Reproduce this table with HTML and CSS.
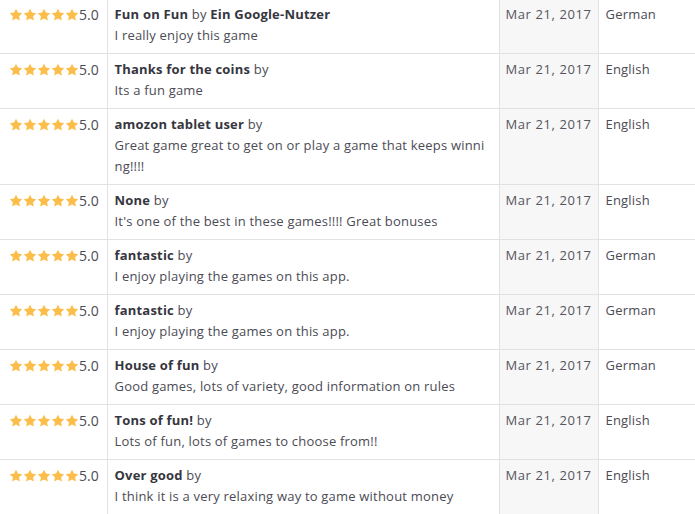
FILE: index.html
```html
<!DOCTYPE html>
<html>
<head>
<meta charset="utf-8">
<link rel="stylesheet" href="styles.css">
</head>
<body>
<svg width="0" height="0" class="defs"><defs><symbol id="star" viewBox="0 0 24 24"><path d="M12 1.2l3.3 6.7 7.4 1.1-5.4 5.2 1.3 7.4L12 18.1l-6.6 3.5 1.3-7.4L1.3 9l7.4-1.1z"/></symbol></defs></svg>
<table class="reviews">
<colgroup><col class="c-rating"><col class="c-review"><col class="c-date"><col class="c-lang"></colgroup>
<tbody>
<tr><td class="rating"><span class="stars"><svg><use href="#star"/></svg><svg><use href="#star"/></svg><svg><use href="#star"/></svg><svg><use href="#star"/></svg><svg><use href="#star"/></svg></span><span class="score">5.0</span></td><td class="review"><b>Fun on Fun</b> by <b>Ein Google-Nutzer</b><br>I really enjoy this game</td><td class="date">Mar 21, 2017</td><td class="lang">German</td></tr>
<tr><td class="rating"><span class="stars"><svg><use href="#star"/></svg><svg><use href="#star"/></svg><svg><use href="#star"/></svg><svg><use href="#star"/></svg><svg><use href="#star"/></svg></span><span class="score">5.0</span></td><td class="review"><b>Thanks for the coins</b> by<br>Its a fun game</td><td class="date">Mar 21, 2017</td><td class="lang">English</td></tr>
<tr><td class="rating"><span class="stars"><svg><use href="#star"/></svg><svg><use href="#star"/></svg><svg><use href="#star"/></svg><svg><use href="#star"/></svg><svg><use href="#star"/></svg></span><span class="score">5.0</span></td><td class="review"><b>amozon tablet user</b> by<br>Great game great to get on or play a game that keeps winning!!!!</td><td class="date">Mar 21, 2017</td><td class="lang">English</td></tr>
<tr><td class="rating"><span class="stars"><svg><use href="#star"/></svg><svg><use href="#star"/></svg><svg><use href="#star"/></svg><svg><use href="#star"/></svg><svg><use href="#star"/></svg></span><span class="score">5.0</span></td><td class="review"><b>None</b> by<br>It's one of the best in these games!!!! Great bonuses</td><td class="date">Mar 21, 2017</td><td class="lang">English</td></tr>
<tr><td class="rating"><span class="stars"><svg><use href="#star"/></svg><svg><use href="#star"/></svg><svg><use href="#star"/></svg><svg><use href="#star"/></svg><svg><use href="#star"/></svg></span><span class="score">5.0</span></td><td class="review"><b>fantastic</b> by<br>I enjoy playing the games on this app.</td><td class="date">Mar 21, 2017</td><td class="lang">German</td></tr>
<tr><td class="rating"><span class="stars"><svg><use href="#star"/></svg><svg><use href="#star"/></svg><svg><use href="#star"/></svg><svg><use href="#star"/></svg><svg><use href="#star"/></svg></span><span class="score">5.0</span></td><td class="review"><b>fantastic</b> by<br>I enjoy playing the games on this app.</td><td class="date">Mar 21, 2017</td><td class="lang">German</td></tr>
<tr><td class="rating"><span class="stars"><svg><use href="#star"/></svg><svg><use href="#star"/></svg><svg><use href="#star"/></svg><svg><use href="#star"/></svg><svg><use href="#star"/></svg></span><span class="score">5.0</span></td><td class="review"><b>House of fun</b> by<br>Good games, lots of variety, good information on rules</td><td class="date">Mar 21, 2017</td><td class="lang">German</td></tr>
<tr><td class="rating"><span class="stars"><svg><use href="#star"/></svg><svg><use href="#star"/></svg><svg><use href="#star"/></svg><svg><use href="#star"/></svg><svg><use href="#star"/></svg></span><span class="score">5.0</span></td><td class="review"><b>Tons of fun!</b> by<br>Lots of fun, lots of games to choose from!!</td><td class="date">Mar 21, 2017</td><td class="lang">English</td></tr>
<tr><td class="rating"><span class="stars"><svg><use href="#star"/></svg><svg><use href="#star"/></svg><svg><use href="#star"/></svg><svg><use href="#star"/></svg><svg><use href="#star"/></svg></span><span class="score">5.0</span></td><td class="review"><b>Over good</b> by<br>I think it is a very relaxing way to game without money</td><td class="date">Mar 21, 2017</td><td class="lang">English</td></tr>
</tbody>
</table>
</body>
</html>
```
FILE: styles.css
```css
html, body { margin: 0; padding: 0; background: #fff; }
body {
  font-family: "Open Sans", Lato, sans-serif;
  font-size: 13px;
  letter-spacing: 0.2px;
  color: #4b4b55;
  overflow: hidden;
}
.defs { position: absolute; width: 0; height: 0; }
.reviews {
  border-collapse: collapse;
  table-layout: fixed;
  width: 695px;
  margin-top: -1px;
}
.c-rating { width: 107px; }
.c-review { width: 392px; }
.c-date { width: 99px; }
.c-lang { width: 97px; }
.reviews td {
  vertical-align: top;
  line-height: 21px;
  padding: 5px 5px 7px 7px;
  border-bottom: 1px solid #e2e2e2;
  border-right: 1px solid #e2e2e2;
}
.reviews td:last-child { border-right: none; }
.rating { padding-left: 9px !important; padding-right: 0 !important; white-space: nowrap; letter-spacing: 0; }
.stars { display: inline-flex; vertical-align: top; height: 21px; align-items: center; }
.stars svg { width: 14px; height: 14px; fill: #fcbe4a; }
.score { font-size: 14px; color: #4b4b55; }
.review b { font-weight: 700; color: #363640; }
.review { word-break: break-all; padding-right: 9px !important; }
.date { background: #f7f7f7; white-space: nowrap; color: #55555e; letter-spacing: 0.6px; padding-left: 6px !important; }
.lang { color: #4b4b55; }
```
